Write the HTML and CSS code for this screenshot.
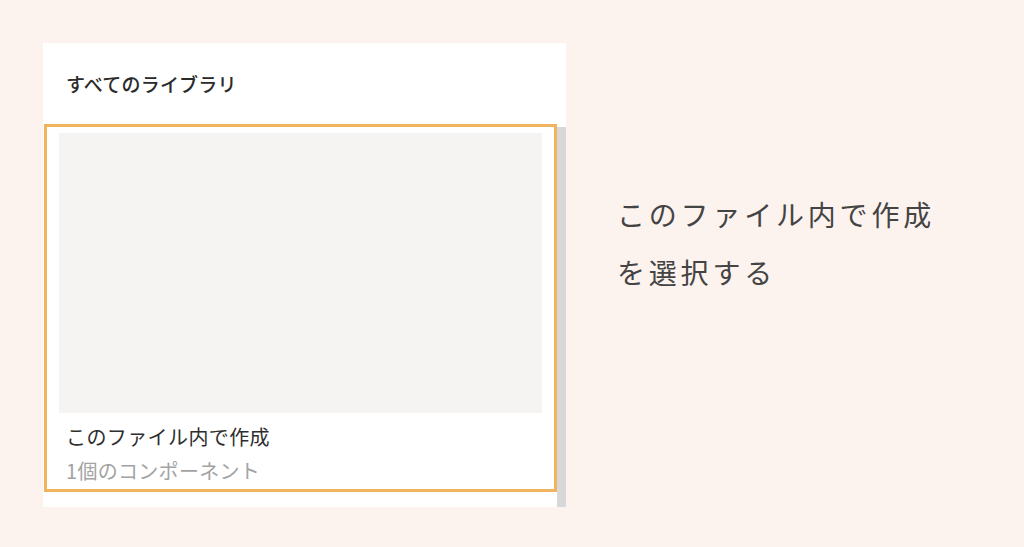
FILE: index.html
```html
<!DOCTYPE html>
<html lang="ja">
<head>
<meta charset="utf-8">
<link rel="stylesheet" href="styles.css">
</head>
<body>
<main class="stage">
  <section class="panel">
    <header class="panel-head">すべてのライブラリ</header>
    <div class="panel-body">
      <div class="card">
        <div class="preview"></div>
        <div class="card-title">このファイル内で作成</div>
        <div class="card-sub">1個のコンポーネント</div>
      </div>
      <div class="scrollbar"></div>
    </div>
  </section>
  <p class="caption">このファイル内で作成<br>を選択する</p>
</main>
</body>
</html>
```
FILE: styles.css
```css
html, body {
  margin: 0;
  padding: 0;
}
body {
  background: #fdf3ee;
  width: 1024px;
  height: 547px;
  overflow: hidden;
  font-family: "Noto Sans CJK JP", "Noto Sans", sans-serif;
}
.stage {
  display: flex;
  align-items: flex-start;
  padding: 43px 0 0 43px;
}
.panel {
  width: 523px;
  height: 464px;
  background: #ffffff;
  display: flex;
  flex-direction: column;
}
.panel-head {
  height: 81px;
  box-sizing: border-box;
  padding: 27px 0 0 23px;
  font-size: 19px;
  line-height: 28px;
  font-weight: 500;
  color: #2b2b2b;
  letter-spacing: 0.2px;
}
.panel-body {
  display: flex;
  align-items: flex-start;
}
.card {
  margin-left: 1px;
  width: 513px;
  height: 368px;
  box-sizing: border-box;
  border: 3px solid #f0b45e;
  padding: 6px 12px 0 12px;
}
.preview {
  height: 280px;
  background: #f6f3f3;
}
.card-title {
  margin-top: 8px;
  padding-left: 7px;
  font-size: 20px;
  line-height: 32px;
  color: #2e2e2e;
  letter-spacing: 0.4px;
}
.card-sub {
  margin-top: 1px;
  padding-left: 7px;
  font-size: 20px;
  line-height: 34px;
  color: #a3a3a3;
  letter-spacing: 0.3px;
}
.scrollbar {
  margin-top: 3px;
  width: 9px;
  height: 380px;
  background: #d8d8d8;
}
.caption {
  margin: 142px 0 0 51px;
  font-size: 28px;
  line-height: 58px;
  color: #444444;
  letter-spacing: 3.8px;
}
```
